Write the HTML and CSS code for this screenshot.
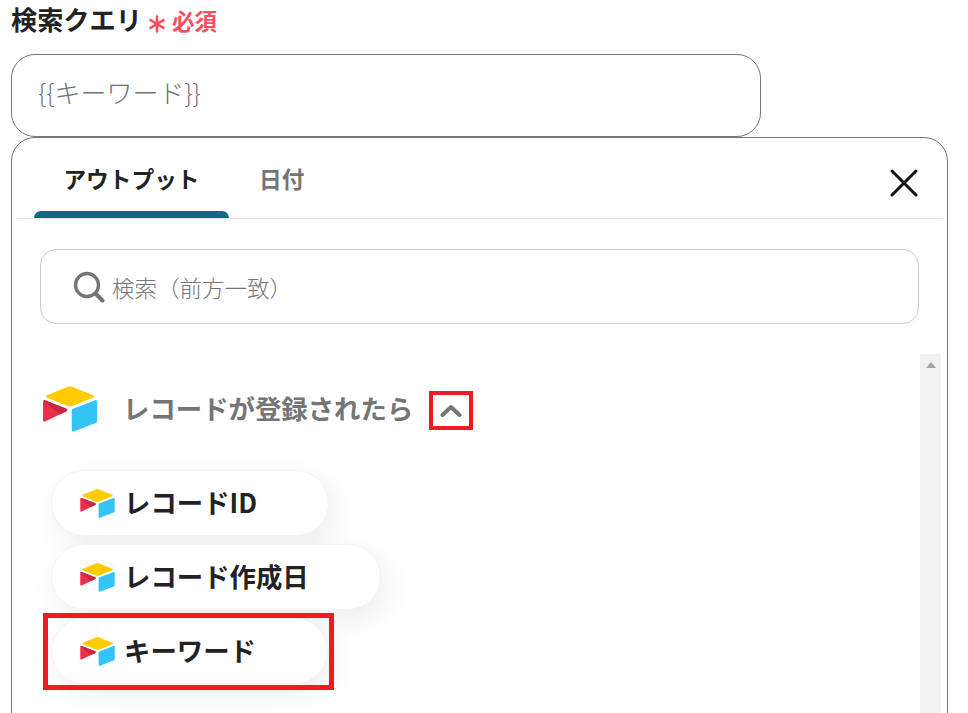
FILE: index.html
```html
<!DOCTYPE html>
<html lang="ja">

<head>
    <meta charset="UTF-8">
    <meta name="viewport" content="width=device-width, initial-scale=1.0">
    <title>検索クエリ</title>
    <link rel="stylesheet" href="styles.css">
</head>

<body>
    <svg class="defs" width="0" height="0">
        <symbol id="airtable" viewBox="11 10 177 149">
            <path fill="#fc0" d="M90.04 12.37L24.08 39.66C20.41 41.18 20.45 46.39 24.14 47.85L90.38 74.12C96.2 76.43 102.68 76.43 108.5 74.12L174.73 47.85C178.42 46.39 178.46 41.18 174.79 39.66L108.83 12.37C102.82 9.88 96.06 9.88 90.04 12.37Z" />
            <path fill="#33c4f5" d="M105.31 88.46V154.08C105.31 157.2 108.46 159.33 111.36 158.18L185.16 129.54C186.85 128.87 187.95 127.24 187.95 125.43V59.81C187.95 56.69 184.81 54.56 181.91 55.71L108.1 84.35C106.42 85.02 105.31 86.65 105.31 88.46Z" />
            <path fill="#ed3049" d="M88.08 91.85L66.17 102.42L63.95 103.5L17.71 125.65C14.78 127.07 11.04 124.93 11.04 121.67V60.09C11.04 58.91 11.64 57.89 12.45 57.13C12.79 56.79 13.18 56.51 13.57 56.29C14.68 55.62 16.25 55.45 17.59 55.98L87.71 83.76C91.27 85.17 91.55 90.17 88.08 91.85Z" />
            <path fill="#c62842" d="M88.08 91.85L66.17 102.42L12.45 57.13C12.79 56.79 13.18 56.51 13.57 56.29C14.68 55.62 16.25 55.45 17.59 55.98L87.71 83.76C91.27 85.17 91.55 90.17 88.08 91.85Z" />
        </symbol>
    </svg>

    <div class="field-label">
        <span class="label-text">検索クエリ</span>
        <svg class="required-mark" width="18" height="18" viewBox="0 0 18 18">
            <path d="M9 1.5V16.5M2.5 5.2L15.5 12.8M15.5 5.2L2.5 12.8" stroke="#ff4d5e" stroke-width="2.6" stroke-linecap="round" fill="none" />
        </svg>
        <span class="required-text">必須</span>
    </div>

    <div class="query-input"><span>{{キーワード}}</span></div>

    <div class="panel">
        <div class="tabs">
            <div class="tab active">アウトプット</div>
            <div class="tab">日付</div>
            <button class="close-btn" aria-label="閉じる">
                <svg width="30" height="30" viewBox="0 0 30 30">
                    <path d="M3 3L27 27M27 3L3 27" stroke="#111" stroke-width="3" stroke-linecap="round" fill="none" />
                </svg>
            </button>
        </div>

        <div class="search-box">
            <svg class="search-icon" width="32" height="32" viewBox="0 0 32 32">
                <circle cx="14" cy="14" r="11.5" stroke="#757575" stroke-width="3.4" fill="none" />
                <path d="M22.5 22.5L29.5 29.5" stroke="#757575" stroke-width="4" stroke-linecap="round" />
            </svg>
            <span class="search-text">検索（前方一致）</span>
        </div>

        <div class="list-area">
            <div class="list">
                <div class="group-head">
                    <svg class="logo-large"><use href="#airtable" /></svg>
                    <span class="group-title">レコードが登録されたら</span>
                    <span class="chevron-box">
                        <svg width="22" height="13" viewBox="0 0 22 13">
                            <path d="M2.5 11L11 3L19.5 11" stroke="#757575" stroke-width="4" stroke-linecap="round" stroke-linejoin="round" fill="none" />
                        </svg>
                    </span>
                </div>

                <div class="pills">
                    <div class="pill">
                        <svg class="logo-small"><use href="#airtable" /></svg>
                        <span class="pill-text">レコードID</span>
                    </div>
                    <div class="pill">
                        <svg class="logo-small"><use href="#airtable" /></svg>
                        <span class="pill-text">レコード作成日</span>
                    </div>
                    <div class="pill marked">
                        <svg class="logo-small"><use href="#airtable" /></svg>
                        <span class="pill-text">キーワード</span>
                    </div>
                </div>
            </div>

            <div class="scrollbar">
                <span class="scroll-arrow"></span>
            </div>
        </div>
    </div>
</body>

</html>
```

FILE: styles.css
```css
html,
body {
    height: 713px;
    overflow: hidden;
}

body {
    margin: 0;
    padding: 0 20px 0 11px;
    background: #fff;
    color: #222;
    font-family: "Noto Sans CJK JP", "Noto Sans", sans-serif;
}

.defs {
    display: block;
    position: absolute;
}

/* ラベル */
.field-label {
    display: flex;
    align-items: center;
    height: 40px;
    margin-bottom: 14px;
    font-weight: 700;
    white-space: nowrap;
}

.label-text {
    font-size: 26.2px;
    line-height: 40px;
    height: 40px;
    position: relative;
    top: -1px;
}

.required-mark {
    margin-left: 6px;
    margin-top: 8px;
    flex-shrink: 0;
}

.required-text {
    color: #ff4d5e;
    font-size: 22.5px;
    margin-left: 6px;
}

/* 入力欄 */
.query-input {
    box-sizing: border-box;
    width: 750px;
    height: 83px;
    padding: 0 26px 8px;
    display: flex;
    align-items: center;
    border: 1px solid #777;
    border-radius: 24px;
    color: #6e7378;
    font-size: 26px;
    font-weight: 300;
}

/* パネル */
.panel {
    box-sizing: border-box;
    width: 937px;
    height: 620px;
    border: 1px solid #777;
    border-radius: 24px;
    padding: 0 5px 0 5px;
}

.tabs {
    display: flex;
    height: 81px;
    padding-left: 17px;
    border-bottom: 1px solid #e4e4e4;
    box-sizing: border-box;
}

.tab {
    box-sizing: border-box;
    height: 80px;
    padding: 23px 30px 0;
    font-size: 22.7px;
    line-height: 36px;
    font-weight: 700;
    color: #757575;
    white-space: nowrap;
    position: relative;
}

.tab.active {
    width: 195px;
    padding-left: 0;
    padding-right: 0;
    text-align: center;
    color: #222;
}

/* 選択中タブの下線 */
.tab.active::after {
    content: "";
    position: absolute;
    left: 0;
    right: 0;
    bottom: 0;
    height: 7px;
    background: #0f6a82;
    border-radius: 7px 7px 0 0;
}

.close-btn {
    margin-left: auto;
    margin-right: 23px;
    margin-top: 30px;
    width: 30px;
    height: 30px;
    padding: 0;
    border: none;
    background: none;
}

/* 検索 */
.search-box {
    box-sizing: border-box;
    display: flex;
    align-items: center;
    gap: 7px;
    width: 879px;
    height: 75px;
    margin: 30px 0 30px 23px;
    padding-left: 32px;
    border: 1px solid #ccc;
    border-radius: 16px;
}

.search-text {
    font-size: 22.5px;
    font-weight: 300;
    color: #757575;
}

/* リスト */
.list-area {
    display: flex;
    justify-content: space-between;
}

.list {
    padding: 32px 0 0 26px;
}

.group-head {
    display: flex;
    align-items: center;
    height: 46px;
}

.logo-large {
    width: 54px;
    height: 46px;
    flex-shrink: 0;
}

.group-title {
    margin-left: 26px;
    padding-bottom: 4px;
    font-size: 26.4px;
    font-weight: 700;
    color: #757575;
    white-space: nowrap;
}

.chevron-box {
    box-sizing: border-box;
    display: flex;
    align-items: center;
    justify-content: center;
    width: 44px;
    height: 39px;
    margin-left: 16px;
    margin-top: 2px;
    border: 4px solid #ed1c24;
}

.pills {
    display: flex;
    flex-direction: column;
    align-items: flex-start;
    gap: 8px;
    margin: 38px 0 0 8px;
}

.pill {
    box-sizing: border-box;
    display: flex;
    align-items: center;
    gap: 9px;
    height: 66px;
    padding: 0 71px 0 28px;
    background: #fff;
    border: 1px solid #f4f4f4;
    border-radius: 33px;
    box-shadow: 6px 10px 30px rgba(0, 0, 0, .07);
    position: relative;
}

.pill-text {
    padding-bottom: 4px;
    font-size: 26.4px;
    font-weight: 700;
    color: #222;
    white-space: nowrap;
}

.logo-small {
    width: 35px;
    height: 29px;
    flex-shrink: 0;
}

/* 赤枠の注釈 */
.pill.marked::after {
    content: "";
    position: absolute;
    top: -6px;
    left: -9px;
    right: -7px;
    bottom: -7px;
    border: 5px solid #ed1c24;
}

/* スクロールバー */
.scrollbar {
    width: 21px;
    height: 360px;
    margin-right: 1px;
    background: #f1f1f1;
    display: flex;
    justify-content: center;
    padding-top: 8px;
    box-sizing: border-box;
}

.scroll-arrow {
    width: 0;
    height: 0;
    border-left: 5px solid transparent;
    border-right: 5px solid transparent;
    border-bottom: 6px solid #a3a3a3;
}
```
